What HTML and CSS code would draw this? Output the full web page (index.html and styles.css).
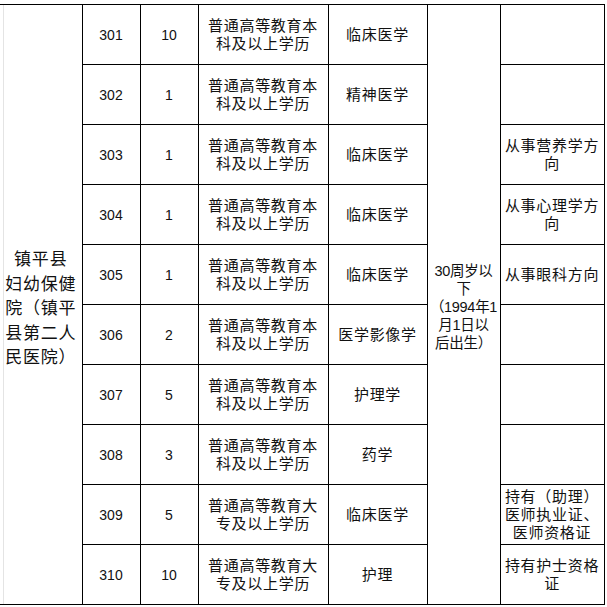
FILE: index.html
```html
<!DOCTYPE html>
<html lang="zh-CN">
<head>
<meta charset="utf-8">
<title>招聘岗位表</title>
<link rel="stylesheet" href="styles.css">
</head>
<body>
<table class="jobs">
  <colgroup>
    <col class="c-unit">
    <col class="c-code">
    <col class="c-num">
    <col class="c-edu">
    <col class="c-major">
    <col class="c-age">
    <col class="c-note">
  </colgroup>
  <tbody>
    <tr>
      <td class="unit" rowspan="10">镇平县<br>妇幼保健<br>院（镇平<br>县第二人<br>民医院）</td>
      <td class="num">301</td>
      <td class="num">10</td>
      <td class="txt">普通高等教育本<br>科及以上学历</td>
      <td class="txt">临床医学</td>
      <td class="txt age" rowspan="10">30周岁以<br>下<br>（1994年1<br>月1日以<br>后出生）</td>
      <td class="txt"></td>
    </tr>
    <tr>
      <td class="num">302</td>
      <td class="num">1</td>
      <td class="txt">普通高等教育本<br>科及以上学历</td>
      <td class="txt">精神医学</td>
      <td class="txt"></td>
    </tr>
    <tr>
      <td class="num">303</td>
      <td class="num">1</td>
      <td class="txt">普通高等教育本<br>科及以上学历</td>
      <td class="txt">临床医学</td>
      <td class="txt">从事营养学方<br>向</td>
    </tr>
    <tr>
      <td class="num">304</td>
      <td class="num">1</td>
      <td class="txt">普通高等教育本<br>科及以上学历</td>
      <td class="txt">临床医学</td>
      <td class="txt">从事心理学方<br>向</td>
    </tr>
    <tr>
      <td class="num">305</td>
      <td class="num">1</td>
      <td class="txt">普通高等教育本<br>科及以上学历</td>
      <td class="txt">临床医学</td>
      <td class="txt">从事眼科方向</td>
    </tr>
    <tr>
      <td class="num">306</td>
      <td class="num">2</td>
      <td class="txt">普通高等教育本<br>科及以上学历</td>
      <td class="txt">医学影像学</td>
      <td class="txt"></td>
    </tr>
    <tr>
      <td class="num">307</td>
      <td class="num">5</td>
      <td class="txt">普通高等教育本<br>科及以上学历</td>
      <td class="txt">护理学</td>
      <td class="txt"></td>
    </tr>
    <tr>
      <td class="num">308</td>
      <td class="num">3</td>
      <td class="txt">普通高等教育本<br>科及以上学历</td>
      <td class="txt">药学</td>
      <td class="txt"></td>
    </tr>
    <tr>
      <td class="num">309</td>
      <td class="num">5</td>
      <td class="txt">普通高等教育大<br>专及以上学历</td>
      <td class="txt">临床医学</td>
      <td class="txt">持有（助理）<br>医师执业证、<br>医师资格证</td>
    </tr>
    <tr>
      <td class="num">310</td>
      <td class="num">10</td>
      <td class="txt">普通高等教育大<br>专及以上学历</td>
      <td class="txt">护理</td>
      <td class="txt">持有护士资格<br>证</td>
    </tr>
  </tbody>
</table>
</body>
</html>
```

FILE: styles.css
```css
html, body {
  margin: 0;
  padding: 0;
  background: #ffffff;
}

body {
  padding-top: 4px;
  font-family: "Liberation Sans", "Noto Sans CJK SC", sans-serif;
  color: #111111;
}

.jobs {
  border-collapse: collapse;
  table-layout: fixed;
  width: 604px;
}

.c-unit { width: 82px; }
.c-code { width: 58px; }
.c-num { width: 58px; }
.c-edu { width: 130px; }
.c-major { width: 99px; }
.c-age { width: 73px; }
.c-note { width: 104px; }

.jobs td {
  border: 1px solid #000000;
  height: 59px;
  padding: 0;
  text-align: center;
  vertical-align: middle;
  white-space: nowrap;
  overflow: hidden;
}

.jobs td.unit {
  border-left: none;
  font-family: "Noto Sans CJK SC", sans-serif;
  font-size: 17px;
  line-height: 24.5px;
  letter-spacing: 0.8px;
  background: linear-gradient(to right, transparent 3px, #e4e4e4 3px, #e4e4e4 4px, transparent 4px);
  padding-top: 6px;
}

.jobs td.num {
  font-size: 14px;
}

.jobs td.txt {
  font-size: 15px;
  line-height: 18px;
  letter-spacing: 0.7px;
}

.jobs td.age {
  padding-top: 5px;
  font-size: 14.5px;
  letter-spacing: -0.3px;
}
```
